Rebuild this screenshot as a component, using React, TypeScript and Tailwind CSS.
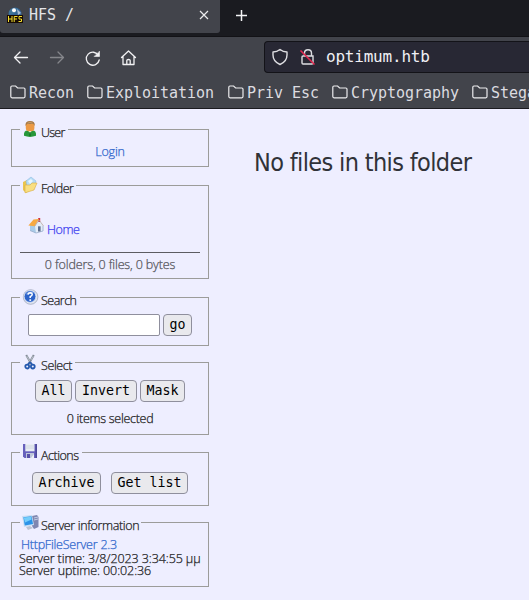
import type { ReactNode } from 'react';

const MONO = "font-['DejaVu_Sans_Mono','Liberation_Mono',monospace]";

function Folder() {
  return (
    <svg width="16" height="14" viewBox="0 0 16 14" fill="none" stroke="#ececee" strokeWidth="1.2" className="shrink-0">
      <path d="M.8 2.2Q.8 1 2 1H5.6L7.6 3H13.8Q15 3 15 4.2V11.6Q15 12.8 13.8 12.8H2Q.8 12.8 .8 11.6Z" />
    </svg>
  );
}

function Bookmark({ label, width }: { label: string; width: string }) {
  return (
    <div className={`flex shrink-0 items-center gap-[3px] ${width}`}>
      <Folder />
      <span className="whitespace-pre pt-[2px] text-[15px] leading-5 tracking-[-0.03px] text-[#dcdce0]">{label}</span>
    </div>
  );
}

function Panel({ icon, title, titleClass, height, children }: { icon: ReactNode; title: string; titleClass: string; height: string; children: ReactNode }) {
  return (
    <fieldset className={`w-[198px] min-w-0 border border-[#9c9c9a] ${height}`}>
      <legend className="ml-2 flex h-[19px] items-start pl-[2px] pr-[3px]">
        <span className="h-[18px] w-[19px] shrink-0">{icon}</span>
        <span className={`mt-[4px] whitespace-nowrap leading-[18px] text-[#1c1c22] ${titleClass}`}>{title}</span>
      </legend>
      {children}
    </fieldset>
  );
}

function Button({ children, width }: { children: ReactNode; width: string }) {
  return (
    <button className={`h-[22px] shrink-0 whitespace-pre rounded-[4px] border border-[#8f8f9d] bg-[#e9e9ed] text-center text-[13.3px] leading-[20px] text-black [-webkit-text-stroke:0px] ${MONO} ${width}`}>
      {children}
    </button>
  );
}

const UserIcon = () => (
  <svg width="16" height="18" viewBox="0 0 16 18">
    <path d="M2 15.8Q1.5 10.5 5.5 10.5H10.5Q14.5 10.5 14 15.8Q8 18 2 15.8Z" fill="#27973a" />
    <path d="M6 10H10L8 14Z" fill="#f0f5ed" />
    <rect x="3.8" y="2" width="8.6" height="9.2" rx="3.2" fill="#ec9a45" />
    <path d="M3.5 6Q3 1 8 1Q13.5 1 12.6 6L11.5 4H5Z" fill="#a77945" />
    <path d="M5.5 3.2Q8 1.8 10.5 3.2" stroke="#c9a06d" fill="none" />
    <path d="M7.3 12H8.7L9 16H7Z" fill="#1b7a2b" />
  </svg>
);
const FolderIcon = () => (
  <svg width="17" height="18" viewBox="0 0 17 18">
    <path d="M1 6L5 4L8 6L9 14L4 17L1 14Z" fill="#eac54e" />
    <path d="M4 5L9 1L14 5L12 11L5 10Z" fill="#b6dcf6" stroke="#85b4dc" strokeWidth=".5" />
    <path d="M6 5L9 3L11 5L8 8Z" fill="#e6f6ff" />
    <path d="M3 9L8 9L10 7H15L12 14L3 16.8Z" fill="#f9df82" stroke="#d7ad43" strokeWidth=".6" />
  </svg>
);
const HomeIcon = () => (
  <svg width="16" height="17" viewBox="0 0 16 17">
    <path d="M2 8L8 6V16L2 13.5Z" fill="#a9cbe8" />
    <path d="M6.8 8L11 3L15.2 9V14L8 16Z" fill="#e4edf8" />
    <path d="M15 9V14L8 16L2 13.5" fill="none" stroke="#97acca" strokeWidth=".8" />
    <rect x="10.2" y="1" width="2" height="4" fill="#cd3540" />
    <path d="M.4 8.4L5.5 2.6L11 2L6.7 9.3Z" fill="#f7a941" />
    <path d="M6.7 9.3L11 3L15.5 9" fill="none" stroke="#b9a7a0" strokeWidth=".8" />
    <rect x="10" y="9.3" width="2.6" height="5.2" fill="#5d6c8b" />
  </svg>
);
const HelpIcon = () => (
  <svg width="17" height="17" viewBox="0 0 17 17">
    <circle cx="8.6" cy="9" r="7.3" fill="#dfe4ee" stroke="#a2aabf" strokeWidth=".8" />
    <circle cx="8" cy="8.5" r="5.9" fill="#2d63c9" stroke="#f4f7fc" strokeWidth=".7" />
    <path d="M3.5 6.5Q7 1.5 12 4.5Q9 6.5 3.5 6.5Z" fill="#719ce6" />
    <path d="M6 6.7Q6.2 4.8 8.2 4.8Q10.2 4.9 10.2 6.5Q10.2 7.7 8.2 8.7V10" fill="none" stroke="#fff" strokeWidth="1.5" />
    <rect x="7.4" y="11.3" width="1.7" height="1.6" fill="#fff" />
  </svg>
);
const ScissorsIcon = () => (
  <svg width="16" height="18" viewBox="0 0 16 18" fill="none">
    <path d="M4.2 2L9.6 11.5M11.8 2L6.4 11.5" stroke="#858d99" strokeWidth="2" />
    <path d="M4.7 3L8 8.5M11.3 3L9 7" stroke="#ccd2da" strokeWidth=".7" />
    <path d="M8 9L5.5 12M8 9L10.5 12" stroke="#2459af" strokeWidth="1.6" />
    <circle cx="5.2" cy="13.6" r="1.9" stroke="#2459af" strokeWidth="1.8" />
    <circle cx="10.8" cy="13.6" r="1.9" stroke="#2459af" strokeWidth="1.8" />
  </svg>
);
const SaveIcon = () => (
  <svg width="16" height="17" viewBox="0 0 16 17">
    <path d="M1 1H15V15H2.5L1 13.5Z" fill="#6660bd" />
    <path d="M14.2 1V15" stroke="#4b4797" strokeWidth="1.4" />
    <rect x="3.3" y="1" width="9.2" height="7.3" fill="#e8edf3" />
    <path d="M4 3H12M4 5H12" stroke="#c5ceda" strokeWidth=".7" />
    <path d="M4 10H12V15H4Z" fill="#bdc6d9" />
    <path d="M5 11H8V15H5Z" fill="#5750a8" />
    <path d="M9 15L12 11V15Z" fill="#edf1f7" />
  </svg>
);
const ServerIcon = () => (
  <svg width="17" height="18" viewBox="0 0 17 18">
    <path d="M10 3L15 2L16.5 4V14L12 16L10 13Z" fill="#7f86b0" />
    <path d="M12 5L16 4M12 7L16 6" stroke="#c3cde4" />
    <path d="M0 3L10 2L12 12L2 14Z" fill="#c6ddf3" />
    <path d="M1.3 4.2L9.5 3.2L11 11L2.8 12.4Z" fill="#2b93e8" />
    <path d="M1.7 4.6L9 3.8L9.6 6.5L3 9.5Z" fill="#74cdfb" />
    <path d="M4 14L8 13L11 15L6 17Z" fill="#bdc4d3" />
  </svg>
);

function Toolbar() {
  return (
    <div className="flex h-[38px] items-center pt-[2px]">
      <svg width="264" height="34" viewBox="0 40 264 34" fill="none" stroke="#f1f1f3" strokeWidth="1.3" strokeLinecap="round" strokeLinejoin="round" className="shrink-0">
        <path d="M27.5 57.5H14.5M20 52L14.5 57.5L20 63" />
        <path d="M50.5 57.5H63.5M58 52L63.5 57.5L58 63" stroke="#85868b" />
        <path d="M98.5 55.5A6.5 6.5 0 1 0 99.2 60" />
        <path d="M99.5 51.5V56.5H94.5Z" fill="#f1f1f3" strokeWidth=".6" />
        <path d="M121.5 57.5L128.5 51L135.5 57.5M123 56.5V64.5H134V56.5M126.8 64.5V60.5Q126.8 59.5 128.5 59.5Q130.2 59.5 130.2 60.5V64.5" />
      </svg>
      <div className="flex h-8 w-[265px] shrink-0 items-center rounded-l-[4px] border border-r-0 border-[#131318] bg-[#282834]">
        <svg width="61" height="30" viewBox="0 0 61 30" fill="none" stroke="#dedee2" strokeWidth="1.4" className="shrink-0">
          <path d="M15 7.5Q18 10 22 10V13Q22 19.5 15 22.5Q8 19.5 8 13V10Q12 10 15 7.5Z" strokeLinejoin="round" />
          <path d="M38 14H48V21Q48 22 47 22H38Q37 22 37 21V15Q37 14 38 14ZM39.5 14V11Q39.5 7.8 43 7.8Q46.5 7.8 46.5 11V14" />
          <path d="M35.5 8.5L49.5 22.5" stroke="#e22850" strokeWidth="1.6" />
        </svg>
        <span className="text-[16px] leading-5 tracking-[-0.21px] text-[#f0f0f4]">optimum.htb</span>
      </div>
    </div>
  );
}

export default function App() {
  return (
    <div className="h-[600px] w-[529px] overflow-hidden bg-[#eeeeff]">
      <header className={`h-[109px] border-b border-[#1b1b20] bg-[#42444b] text-[#e4e4e8] ${MONO}`}>
        <div className="flex h-[37px] items-start border-b border-[#121216] bg-[#1a1b20]">
          <div className="flex h-[33px] w-[220px] shrink-0 items-start rounded-b-[3px] bg-[#42444b] pl-[7px]">
            <svg width="17" height="24" viewBox="0 0 17 24" className="shrink-0">
              <circle cx="8" cy="14" r="6.5" fill="#326597" />
              <path d="M2 11Q6 6 11 9L8 13L2 15Z" fill="#41769b" />
              <circle cx="7" cy="10.3" r="2" fill="#fff" />
              <path d="M10 9L14 13L11 15Z" fill="#a7bacf" />
              <rect y="15" width="16" height="8" fill="#170b02" />
              <path d="M1.5 16V22M5 16V22M1.5 19H5M7.2 22V16.5H10.5M7 19H10M15 16.5H12V19H14.5V21.5H11.5" fill="none" stroke="#f5df2e" strokeWidth="1" />
            </svg>
            <span className="ml-[5px] mt-[5px] w-[167px] whitespace-pre text-[15px] leading-5">HFS /</span>
            <svg width="16" height="22" viewBox="0 0 16 22" fill="none" stroke="#ececee" strokeWidth="1.2" className="shrink-0">
              <path d="M4 11L12 19M12 11L4 19" />
            </svg>
          </div>
          <svg width="44" height="32" viewBox="0 0 44 32" stroke="#f4f4f5" strokeWidth="1.5">
            <path d="M16 15.5H27M21.5 10V21" />
          </svg>
        </div>
        <Toolbar />
        <div className="flex h-[33px] items-center overflow-hidden pl-[10px]">
          <Bookmark label="Recon" width="w-[77px]" />
          <Bookmark label="Exploitation" width="w-[141px]" />
          <Bookmark label="Priv Esc" width="w-[104px]" />
          <Bookmark label="Cryptography" width="w-[140px]" />
          <Bookmark label="Steganography" width="w-[160px]" />
        </div>
      </header>
      <main className="flex pl-[11px] pt-[11px] font-['Open_Sans','Noto_Sans',sans-serif] text-[12.5px] font-light">
        <aside className="w-[198px] shrink-0 [-webkit-text-stroke:0.25px]">
          <Panel icon={<UserIcon />} title="User" titleClass="tracking-[-0.75px]" height="h-[47px]">
            <p className="pt-[4px] text-center leading-[18px] tracking-[-0.15px] text-[#2e66cc]">Login</p>
          </Panel>
          <div className="h-[9px]" />
          <Panel icon={<FolderIcon />} title="Folder" titleClass="tracking-[-0.55px]" height="h-[103px]">
            <div className="flex h-[57px] items-start pl-4 pt-[22px] text-[#3c3cf0]">
              <HomeIcon />
              <span className="ml-[3px] mt-[4px] leading-[18px] tracking-[-0.45px]">Home</span>
            </div>
            <p className="mx-2 border-t border-[#5c5c62] pt-[3px] text-center leading-[18px] tracking-[-0.14px] text-[#55555b]">0 folders, 0 files, 0 bytes</p>
          </Panel>
          <div className="h-[9px]" />
          <Panel icon={<HelpIcon />} title="Search" titleClass="tracking-[-0.5px]" height="h-[58px]">
            <div className="flex gap-[3px] pl-4 pt-[7px]">
              <input aria-label="Search" className="h-[22px] w-[132px] rounded-[2px] border border-[#8f8f9d] bg-white" />
              <Button width="w-[29px]">go</Button>
            </div>
          </Panel>
          <div className="h-[7px]" />
          <Panel icon={<ScissorsIcon />} title="Select" titleClass="tracking-[-0.4px]" height="h-[82px]">
            <div className="flex gap-[3px] pl-[23px] pt-[8px]">
              <Button width="w-[37px]">All</Button>
              <Button width="w-[62px]">Invert</Button>
              <Button width="w-[45px]">Mask</Button>
            </div>
            <p className="pt-[8px] text-center leading-[18px] tracking-[-0.28px] text-[#1c1c22]">0 items selected</p>
          </Panel>
          <div className="h-[8px]" />
          <Panel icon={<SaveIcon />} title="Actions" titleClass="tracking-[-0.5px]" height="h-[63px]">
            <div className="flex gap-[10px] pl-5 pt-[10px]">
              <Button width="w-[69px]">Archive</Button>
              <Button width="w-[77px]">Get list</Button>
            </div>
          </Panel>
          <div className="h-[7px]" />
          <Panel icon={<ServerIcon />} title="Server information" titleClass="-mr-[1px] tracking-[-0.37px]" height="h-[74px]">
            <div className="whitespace-nowrap pl-[7px] pt-[5px] leading-[12px] text-[#1c1c22]">
              <p className="pl-[2px] leading-[16px] tracking-[-0.23px] text-[#2e66cc]">HttpFileServer 2.3</p>
              <p className="tracking-[-0.1px]">Server time: 3/8/2023 3:34:55 μμ</p>
              <p className="tracking-[-0.08px]">Server uptime: 00:02:36</p>
            </div>
          </Panel>
        </aside>
        <h1 className="ml-[45px] mt-[27px] whitespace-nowrap font-['DejaVu_Sans_Condensed','DejaVu_Sans',sans-serif] text-[25px] font-normal leading-8 tracking-[-0.64px] text-[#303238]">No files in this folder</h1>
      </main>
    </div>
  );
}
